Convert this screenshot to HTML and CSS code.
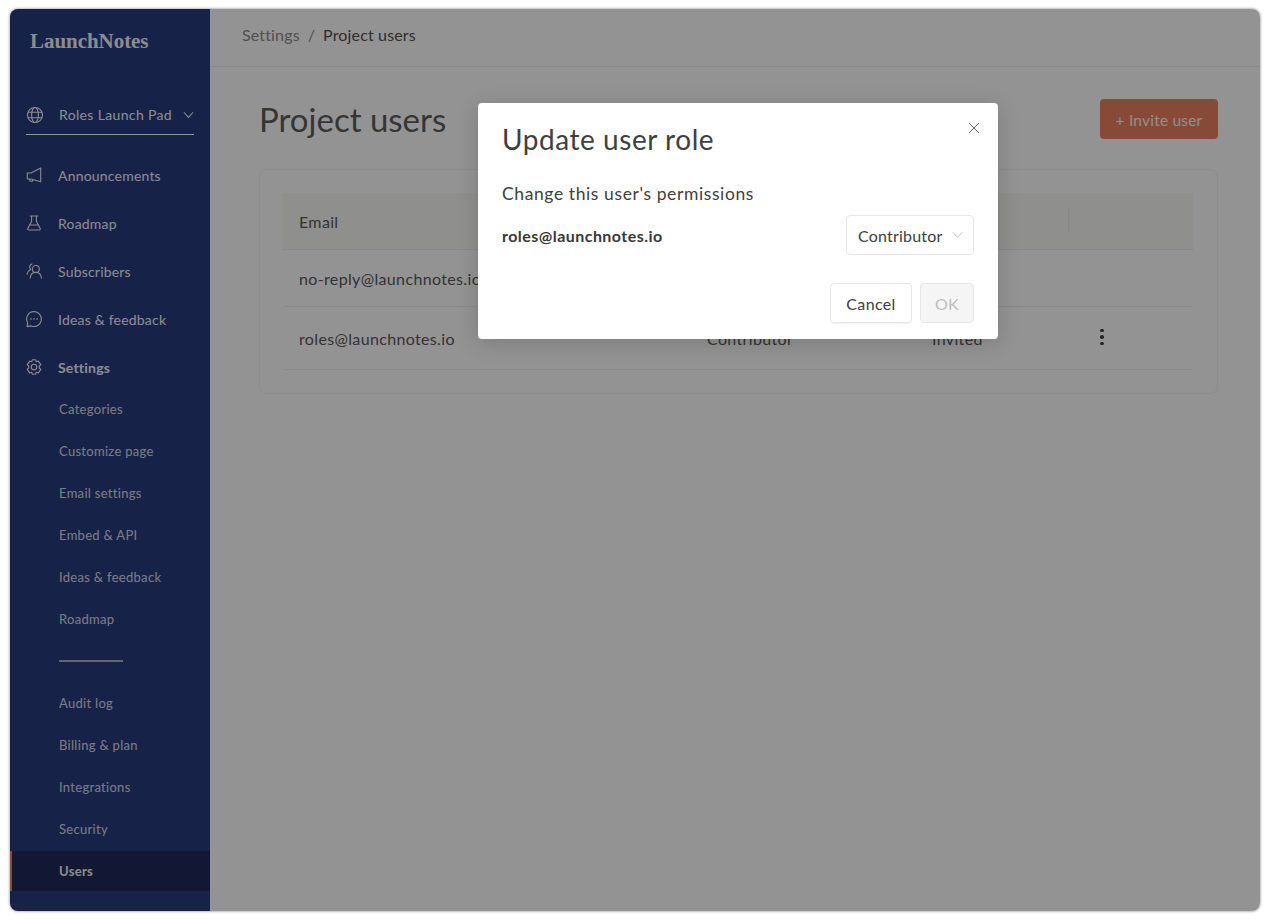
FILE: index.html
```html
<!DOCTYPE html>
<html lang="en">
<head>
<meta charset="utf-8">
<title>Project users</title>
<link rel="stylesheet" href="styles.css">
</head>
<body>
<div class="window">
  <aside class="sidebar">
    <div class="logo">LaunchNotes</div>
    <div class="project">
      <svg class="icon globe" viewBox="0 0 16 16"><circle cx="8" cy="8" r="7.500"/><ellipse cx="8" cy="8" rx="3.400" ry="7.500"/><path d="M1.200 5.300h13.600M1.200 10.700h13.600"/></svg>
      <span class="project-name">Roles Launch Pad</span>
      <svg class="chev" viewBox="0 0 12 8"><path d="M1 1l5 5.600L11 1"/></svg>
    </div>
    <nav class="nav">
      <a class="nav-item"><svg class="icon" viewBox="0 0 16 16"><path d="M14.700 1v13.700L5 12H1.300V6H5zM3.500 12l.5 2.200h2.500l.4-1.600"/></svg>Announcements</a>
      <a class="nav-item"><svg class="icon" viewBox="0 0 16 16"><path d="M4.200 1h7.600M5.600 1v5.200L1.800 13.400c-.4.900.1 1.600 1 1.600h10.400c.9 0 1.400-.7 1-1.600L10.400 6.200V1M3.600 10h8.800"/></svg>Roadmap</a>
      <a class="nav-item"><svg class="icon" viewBox="0 0 16 16"><circle cx="9.800" cy="6" r="3.500"/><path d="M4.200 15c.3-3.400 2.700-5.600 5.600-5.600s5.300 2.200 5.600 5.600M6 1C4.400 1.400 3.600 2.900 3.800 4.600c.1.800.4 1.500.8 2C2.700 7.600 1.300 9.300 1 11.400"/></svg>Subscribers</a>
      <a class="nav-item"><svg class="icon" viewBox="0 0 16 16"><path d="M8 .5a7.500 7.500 0 1 1-3 14.400l-3.900.7.600-3.900A7.500 7.500 0 0 1 8 .5z"/><path class="dots" d="M4.900 8h.1M8 8h.1M11.100 8h.1"/></svg>Ideas &amp; feedback</a>
      <a class="nav-item nav-strong"><svg class="icon" viewBox="0 0 16 16"><circle cx="8" cy="8" r="2.800"/><path d="M6.300.8h3.400l.6 2 2-.7 2.500 3.500-1.500 1.400v2l1.500 1.400-2.500 3.500-2-.7-.6 2H6.300l-.6-2-2 .7-2.500-3.500 1.500-1.400V7L1.200 5.600l2.500-3.500 2 .7z"/></svg>Settings</a>
    </nav>
    <div class="subnav">
      <a class="sub-item">Categories</a>
      <a class="sub-item">Customize page</a>
      <a class="sub-item">Email settings</a>
      <a class="sub-item">Embed &amp; API</a>
      <a class="sub-item">Ideas &amp; feedback</a>
      <a class="sub-item">Roadmap</a>
      <div class="sub-divider"></div>
      <a class="sub-item">Audit log</a>
      <a class="sub-item">Billing &amp; plan</a>
      <a class="sub-item">Integrations</a>
      <a class="sub-item">Security</a>
      <a class="sub-item sub-active">Users</a>
    </div>
  </aside>
  <main class="main">
    <header class="topbar">
      <span class="crumb">Settings</span><span class="crumb-sep">/</span><span class="crumb-current">Project users</span>
    </header>
    <div class="content">
      <div class="page-head">
        <h1 class="page-title">Project users</h1>
        <button class="invite">+ Invite user</button>
      </div>
      <section class="card">
        <div class="row row-head">
          <div class="cell c-email">Email</div>
          <div class="cell c-role">Role</div>
          <div class="cell c-status">Status</div>
          <div class="cell c-action"></div>
        </div>
        <div class="row row-one">
          <div class="cell c-email">no-reply@launchnotes.io</div>
          <div class="cell c-role">Owner</div>
          <div class="cell c-status">Active</div>
          <div class="cell c-action"></div>
        </div>
        <div class="row row-two">
          <div class="cell c-email">roles@launchnotes.io</div>
          <div class="cell c-role">Contributor</div>
          <div class="cell c-status">Invited</div>
          <div class="cell c-action"><span class="kebab"><i></i><i></i><i></i></span></div>
        </div>
      </section>
    </div>
  </main>
  <div class="mask">
    <div class="modal">
      <svg class="close" viewBox="0 0 12 12"><path d="M1 1l10 10M11 1L1 11"/></svg>
      <h2 class="modal-title">Update user role</h2>
      <p class="modal-sub">Change this user's permissions</p>
      <div class="modal-row">
        <strong class="modal-email">roles@launchnotes.io</strong>
        <div class="select">Contributor<svg class="select-chev" viewBox="0 0 12 8"><path d="M1 1l5 5.600L11 1"/></svg></div>
      </div>
      <div class="modal-foot">
        <button class="btn">Cancel</button>
        <button class="btn btn-disabled">OK</button>
      </div>
    </div>
  </div>
</div>
</body>
</html>
```
FILE: styles.css
```css
* { box-sizing: border-box; }
html, body { height: 100%; }
body {
  margin: 0;
  background: #fff;
  padding: 9px 9px 9px 10px;
  font-family: Lato, "Noto Sans", sans-serif;
  color: #3c3c3c;
  overflow: hidden;
}
.window {
  position: relative;
  display: flex;
  height: 902px;
  border-radius: 8px;
  overflow: hidden;
  box-shadow: 0 0 3px rgba(0,0,0,.55);
  background: #fff;
}
.sidebar {
  width: 200px;
  flex: none;
  background: #283b7e;
  color: #f2f2f2;
  display: flex;
  flex-direction: column;
}
.logo {
  font-family: "Liberation Serif", serif;
  font-weight: 700;
  font-size: 21px;
  letter-spacing: -.05px;
  line-height: 24px;
  padding: 20px 0 0 20px;
  color: #f2f2f2;
}
.project {
  display: flex;
  align-items: center;
  margin: 40px 16px 0;
  height: 42px;
  border-bottom: 1px solid #fff;
  padding-top: 2px;
}
.icon {
  width: 16px;
  height: 16px;
  flex: none;
  fill: none;
  stroke: currentColor;
  stroke-width: 1.100;
  stroke-linejoin: round;
  stroke-linecap: round;
  overflow: visible;
}
.icon .dots { stroke-width: 1.600; }
.project .globe { margin: 0 16px 0 1px; }
.project-name { font-size: 14px; letter-spacing: .35px; white-space: nowrap; }
.chev { width: 11px; height: 8px; margin-left: 11px; fill: none; stroke: #f2f2f2; stroke-width: 1.100; flex: none; }
.nav { margin-top: 16px; display: flex; flex-direction: column; }
.nav-item {
  height: 48px;
  display: flex;
  align-items: center;
  gap: 16px;
  padding-left: 16px;
  font-size: 14px;
  letter-spacing: .2px;
}
.nav-strong { font-weight: 700; }
.subnav { display: flex; flex-direction: column; margin-top: -3px; }
.sub-item {
  height: 42px;
  display: flex;
  align-items: center;
  padding-left: 49px;
  font-size: 13px;
  letter-spacing: .3px;
  opacity: .85;
  flex: none;
}
.sub-divider { width: 64px; height: 2px; background: rgba(255,255,255,.6); margin: 20px 0 20px 49px; flex: none; }
.sub-active {
  height: 40px;
  margin-top: 1px;
  font-weight: 700;
  opacity: 1;
  background: #1f2a5a;
  border-left: 2px solid #e8896a;
  padding-left: 47px;
}
.main { flex: 1; min-width: 0; background: #fffefd; display: flex; flex-direction: column; }
.topbar {
  height: 58px;
  flex: none;
  border-bottom: 1px solid #eeedec;
  padding: 0 32px 6px;
  display: flex;
  align-items: center;
  font-size: 16px;
  letter-spacing: .15px;
}
.crumb { color: #8a8a8a; }
.crumb-sep { color: #8a8a8a; margin: 0 8px; }
.crumb-current { color: #505050; }
.content { padding: 32px 42px 0 49px; }
.page-head { display: flex; justify-content: space-between; align-items: center; height: 40px; }
.page-title { margin: 0; font-size: 33px; font-weight: 400; color: #5c5c5c; }
.invite {
  width: 118px;
  height: 40px;
  background: #e8805d;
  border: 0;
  border-radius: 4px;
  padding: 1px 0 0;
  color: #f6f6f6;
  font: inherit;
  font-size: 15.500px;
  letter-spacing: .2px;
}
.card {
  margin-top: 30px;
  height: 225px;
  background: #fffefd;
  border: 1px solid #f3f2f1;
  border-radius: 8px;
  padding: 23px 24px 23px 23px;
}
.row { display: flex; align-items: center; border-bottom: 1px solid #eeedec; font-size: 16px; letter-spacing: .35px; color: #585858; }
.row-head { height: 57px; background: #f7f6f5; }
.row-one { height: 57px; }
.row-two { height: 63px; }
.cell { padding-left: 16px; white-space: nowrap; }
.c-email { width: 408px; }
.c-role { width: 225px; }
.c-status { width: 152px; }
.c-action { flex: 1; position: relative; align-self: stretch; display: flex; align-items: center; }
.row-head .c-action::before { content: ""; position: absolute; left: 0; top: 15px; height: 25px; width: 1px; background: #ebeae9; }
.kebab { display: flex; flex-direction: column; gap: 3px; margin-left: 16px; margin-top: -2px; }
.kebab i { width: 3.500px; height: 3.500px; background: #444; border-radius: 50%; display: block; }
.mask {
  position: absolute;
  inset: 0;
  background: rgba(0,0,0,.42);
}
.modal {
  position: absolute;
  left: 468px;
  top: 94px;
  width: 520px;
  height: 236px;
  background: #fff;
  border-radius: 4px;
  padding: 24px;
  box-shadow: 0 4px 22px rgba(0,0,0,.16);
}
.close { position: absolute; right: 18px; top: 19px; width: 12px; height: 12px; fill: none; stroke: #666; stroke-width: 1; }
.modal-title { margin: 0; font-size: 28px; line-height: 24px; font-weight: 400; letter-spacing: .55px; color: #404040; }
.modal-sub { margin: 33px 0 0; font-size: 17.500px; line-height: 20px; letter-spacing: .6px; color: #404040; }
.modal-row { display: flex; justify-content: space-between; align-items: center; margin-top: 11px; }
.modal-email { font-size: 16px; letter-spacing: .46px; color: #383838; }
.select {
  width: 128px;
  height: 40px;
  border: 1px solid #e6e6e6;
  border-radius: 4px;
  display: flex;
  align-items: center;
  padding-left: 11px;
  font-size: 16px;
  letter-spacing: .2px;
  color: #404040;
}
.select-chev { width: 11px; height: 8px; margin-left: 9px; fill: none; stroke: #bbb; stroke-width: 1; margin-top: -1px; }
.modal-foot { display: flex; justify-content: flex-end; gap: 8px; margin-top: 28px; }
.btn {
  height: 40px;
  width: 82px;
  background: #fff;
  border: 1px solid #e6e6e6;
  border-radius: 4px;
  box-shadow: 0 1px 1px rgba(0,0,0,.05);
  font: inherit;
  font-size: 16px;
  letter-spacing: .35px;
  color: #404040;
}
.btn-disabled { width: 54px; background: #f5f5f5; color: #bdbdbd; box-shadow: none; }
```
